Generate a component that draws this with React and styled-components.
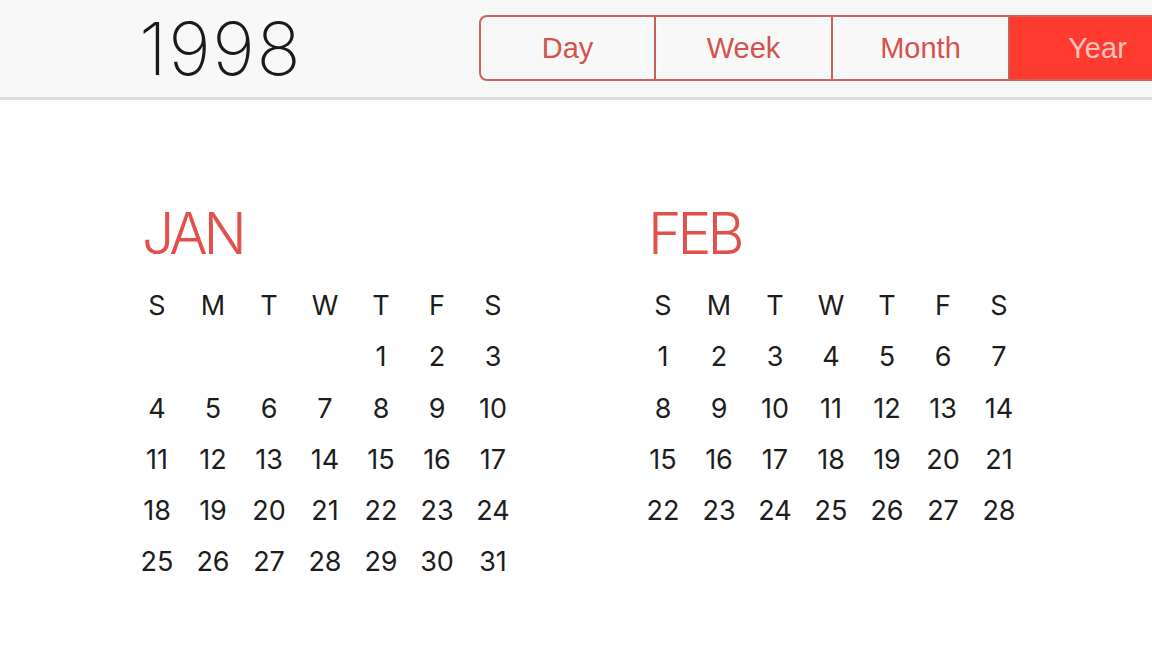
import React from "react";
import styled, { createGlobalStyle } from "styled-components";

const Global = createGlobalStyle`
  html, body { margin: 0; padding: 0; background: #ffffff; }
  body { width: 1152px; height: 648px; overflow: hidden; font-family: Inter, "Noto Sans", sans-serif; }
`;

const Page = styled.div`
  width: 1152px;
  height: 648px;
  overflow: hidden;
  background: #ffffff;
`;

const Header = styled.header`
  height: 97px;
  background: #f8f8f8;
  border-bottom: 3px solid #dcdcdc;
  display: flex;
  align-items: center;
  overflow: hidden;
`;

const YearTitle = styled.h1`
  margin: 0;
  width: 479px;
  box-sizing: border-box;
  padding-left: 139px;
  font-family: Inter, sans-serif;
  font-weight: 200;
  font-size: 73px;
  line-height: 1;
  color: #1a1a1a;
  letter-spacing: 1.5px;
  flex-shrink: 0;
`;

const Segmented = styled.div`
  display: flex;
  flex-shrink: 0;
  height: 66px;
  box-sizing: border-box;
  border: 2px solid #cf625c;
  border-radius: 8px;
  overflow: hidden;
  margin-top: -1px;
`;

const Segment = styled.div`
  width: ${(p) => p.$w}px;
  box-sizing: border-box;
  display: flex;
  align-items: center;
  justify-content: center;
  font-family: "Liberation Sans", Arial, sans-serif;
  font-size: 29px;
  color: ${(p) => (p.$active ? "#f9c3bf" : "#d4524c")};
  background: ${(p) => (p.$active ? "#ff3b30" : "transparent")};
  border-left: ${(p) => (p.$first ? "none" : "2px solid #c8605a")};
`;

const Main = styled.main`
  display: flex;
  gap: 114px;
  padding: 105px 0 0 129px;
`;

const Month = styled.section`
  display: flex;
  flex-direction: column;
`;

const MonthLabel = styled.h2`
  margin: 0 0 17px 0;
  padding-left: 13px;
  font-family: Inter, sans-serif;
  font-weight: 300;
  font-size: 57px;
  line-height: 58px;
  color: #e1504a;
  letter-spacing: -4px;
`;

const Grid = styled.div`
  display: grid;
  grid-template-columns: repeat(7, 56px);
  grid-auto-rows: 51.25px;
`;

const Cell = styled.div`
  display: flex;
  align-items: center;
  justify-content: center;
  font-family: Inter, sans-serif;
  font-size: 27px;
  font-weight: 400;
  line-height: 1;
  color: #1d1d1d;
  grid-column-start: ${(p) => p.$start || "auto"};
`;

const weekdays = ["S", "M", "T", "W", "T", "F", "S"];

function MonthBlock({ name, days, startCol }) {
  return (
    <Month>
      <MonthLabel>{name}</MonthLabel>
      <Grid>
        {weekdays.map((d, i) => (
          <Cell key={"w" + i}>{d}</Cell>
        ))}
        {Array.from({ length: days }, (_, i) => (
          <Cell key={i} $start={i === 0 ? startCol : undefined}>
            {i + 1}
          </Cell>
        ))}
      </Grid>
    </Month>
  );
}

export default function App() {
  return (
    <Page>
      <Global />
      <Header>
        <YearTitle>1998</YearTitle>
        <Segmented>
          <Segment $first $w={173}>Day</Segment>
          <Segment $w={177}>Week</Segment>
          <Segment $w={177}>Month</Segment>
          <Segment $active $w={177}>Year</Segment>
        </Segmented>
      </Header>
      <Main>
        <MonthBlock name="JAN" days={31} startCol={5} />
        <MonthBlock name="FEB" days={28} startCol={1} />
      </Main>
    </Page>
  );
}
